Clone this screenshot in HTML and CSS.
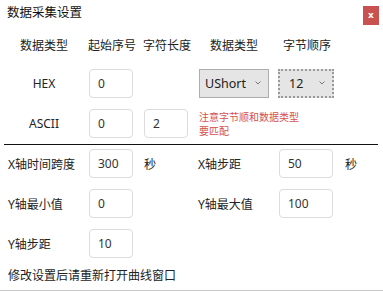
FILE: index.html
```html
<!DOCTYPE html>
<html lang="zh-CN">
<head>
<meta charset="utf-8">
<title>数据采集设置</title>
<link rel="stylesheet" href="styles.css">
</head>
<body>
<div class="window">
  <div class="titlebar">
    <span class="title">数据采集设置</span>
    <span class="close">x</span>
  </div>

  <div class="top-grid">
    <div class="hdr c1">数据类型</div>
    <div class="hdr">起始序号</div>
    <div class="hdr">字符长度</div>
    <div class="hdr c4">数据类型</div>
    <div class="hdr c5">字节顺序</div>

    <div class="lbl c1">HEX</div>
    <div class="cell"><div class="inp">0</div></div>
    <div class="cell"></div>
    <div class="cell"><div class="sel">UShort<svg class="chev" width="6" height="4" viewBox="0 0 6 4"><path d="M0.5 0.5 L3 3 L5.5 0.5" fill="none" stroke="#777" stroke-width="1"/></svg></div></div>
    <div class="cell"><div class="sel sel-focus">12<svg class="chev" width="6" height="4" viewBox="0 0 6 4"><path d="M0.5 0.5 L3 3 L5.5 0.5" fill="none" stroke="#777" stroke-width="1"/></svg></div></div>

    <div class="lbl c1">ASCII</div>
    <div class="cell"><div class="inp">0</div></div>
    <div class="cell"><div class="inp">2</div></div>
    <div class="note">注意字节顺和数据类型<br>要匹配</div>
  </div>

  <div class="sep"></div>

  <div class="bottom-grid">
    <div class="blbl">X轴时间跨度</div>
    <div class="inp">300</div>
    <div class="unit">秒</div>
    <div class="blbl">X轴步距</div>
    <div class="inp wide">50</div>
    <div class="unit u2">秒</div>

    <div class="blbl">Y轴最小值</div>
    <div class="inp">0</div>
    <div class="unit"></div>
    <div class="blbl">Y轴最大值</div>
    <div class="inp wide">100</div>
    <div class="unit u2"></div>

    <div class="blbl">Y轴步距</div>
    <div class="inp">10</div>
  </div>

  <div class="footer">修改设置后请重新打开曲线窗口</div>
</div>
</body>
</html>
```

FILE: styles.css
```css
html, body {
  margin: 0;
  padding: 0;
  background: #ffffff;
}
body {
  font-family: "Noto Sans", "Noto Sans CJK SC", sans-serif;
  color: #222222;
  font-size: 12px;
}
.window {
  width: 383px;
  height: 290px;
  border-bottom: 1px solid #c8c8c8;
  overflow: hidden;
}
.titlebar {
  display: flex;
  justify-content: space-between;
  align-items: flex-start;
  height: 31px;
  padding: 5px 4px 0 7px;
  box-sizing: border-box;
}
.title {
  font-size: 12.5px;
  line-height: 16px;
  color: #111;
}
.close {
  width: 16px;
  height: 19px;
  margin-top: 1px;
  background: #c9514f;
  color: #fff;
  font-family: "DejaVu Sans", sans-serif;
  font-weight: bold;
  font-size: 9px;
  line-height: 18px;
  text-align: center;
}
.top-grid {
  display: grid;
  grid-template-columns: 88px 55px 56px 79px 56px;
  grid-template-rows: 20px 29px 29px;
  row-gap: 11px;
  margin-top: 7px;
}
.hdr {
  line-height: 16px;
  white-space: nowrap;
}
.c1 { text-align: center; }
.c4 { padding-left: 11px; }
.c5 { padding-left: 5px; }
.lbl {
  display: flex;
  align-items: center;
  justify-content: center;
  font-size: 12px;
}
.cell {
  display: flex;
  align-items: stretch;
}
.top-grid .inp { margin-left: 1px; }
.inp {
  width: 44px;
  height: 29px;
  box-sizing: border-box;
  border: 1px solid #dcdcdc;
  border-radius: 4px;
  padding-left: 8px;
  line-height: 27px;
  font-size: 12px;
  color: #333;
}
.inp.wide { width: 54px; }
.sel {
  width: 70px;
  height: 29px;
  box-sizing: border-box;
  border: 1px solid #adadad;
  background: #e5e5e5;
  display: flex;
  align-items: center;
  justify-content: space-between;
  padding: 0 7px 0 5px;
  font-size: 12.5px;
  color: #222;
}
.sel-focus {
  width: 56px;
  border: 2px dotted #9a9a9a;
  padding: 0 7px 0 9px;
}
.chev { display: block; margin-top: -2px; }
.note {
  grid-column: 4 / 6;
  color: #d5504e;
  font-size: 10px;
  line-height: 14px;
  padding-top: 1px;
  height: 29px;
  box-sizing: border-box;
  white-space: nowrap;
}
.sep {
  margin: 6px 5px 0 4px;
  height: 1px;
  background: #111;
}
.bottom-grid {
  display: grid;
  grid-template-columns: 81px 44px 65px 81px 54px 30px;
  grid-auto-rows: 29px;
  row-gap: 11px;
  padding-left: 8px;
  margin-top: 4px;
}
.blbl {
  display: flex;
  align-items: center;
  white-space: nowrap;
}
.unit {
  display: flex;
  align-items: center;
  padding-left: 11px;
}
.unit.u2 { padding-left: 12px; }
.footer {
  margin-top: 10px;
  padding-left: 8px;
  line-height: 16px;
}
```
